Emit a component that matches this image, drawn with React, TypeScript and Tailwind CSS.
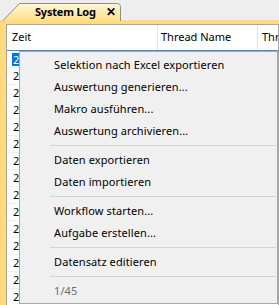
const rows = Array.from({ length: 15 }, () => "2");

type MenuEntry = { label: string; disabled?: boolean } | "sep";

const menu: MenuEntry[] = [
  { label: "Selektion nach Excel exportieren" },
  { label: "Auswertung generieren..." },
  { label: "Makro ausführen..." },
  { label: "Auswertung archivieren..." },
  "sep",
  { label: "Daten exportieren" },
  { label: "Daten importieren" },
  "sep",
  { label: "Workflow starten..." },
  { label: "Aufgabe erstellen..." },
  "sep",
  { label: "Datensatz editieren" },
  "sep",
  { label: "1/45", disabled: true },
];

function Tab() {
  return (
    <div className="relative ml-[2px] mt-[3px] h-[17px] w-[120px] flex items-center">
      <svg className="absolute inset-0" width="120" height="18" viewBox="0 0 120 18">
        <defs>
          <linearGradient id="tabfill" x1="0" y1="0" x2="0" y2="1">
            <stop offset="0" stopColor="#fff7d9" />
            <stop offset="1" stopColor="#ffdf86" />
          </linearGradient>
        </defs>
        <path d="M0.5 18 L17.5 0.5 H115.5 Q118.5 0.5 118.5 3.5 V18" fill="url(#tabfill)" stroke="#8e8e8e" strokeWidth="1" />
      </svg>
      <span className="relative ml-[33px] font-bold text-[11px] tracking-[-0.2px] text-black leading-none">System Log</span>
      <span className="relative ml-[10px] text-[12px] font-bold text-black leading-none">✕</span>
    </div>
  );
}

export default function App() {
  return (
    <div className="relative w-[279px] h-[305px] overflow-hidden bg-[#eeeeee] font-['Noto_Sans',sans-serif] text-[11px] text-black">
      <div className="h-[20px] flex items-start">
        <Tab />
      </div>
      <div className="h-[285px] bg-[#ffda7f] pl-[6px] pt-[4px]">
        <div className="h-full bg-white border-l border-t border-r border-[#a5a5a5] overflow-hidden">
          <div className="h-[26px] flex border-b border-[#3f8fdc]">
            <div className="w-[151px] shrink-0 border-r border-[#e5e5e5] pl-[5px] flex items-center">Zeit</div>
            <div className="w-[100px] shrink-0 border-r border-[#e5e5e5] pl-[3px] flex items-center">Thread Name</div>
            <div className="pl-[4px] flex items-center whitespace-nowrap">Thread ID</div>
          </div>
          {rows.map((r, i) => (
            <div key={i} className="h-[17px] flex items-center border-b border-[#f0f0f0]">
              <span
                className={
                  i === 0
                    ? "ml-[5px] pl-px pr-[2px] bg-[#0078d7] text-white leading-[13px]"
                    : "ml-[6px]"
                }
              >
                {r}
              </span>
            </div>
          ))}
        </div>
      </div>

      <div className="absolute left-[19px] top-[51px] w-[259px] bg-[#f0f0f0] border border-[#a8a8a8] pt-[2px] pb-px">
        {menu.map((m, i) =>
          m === "sep" ? (
            <div key={i} className="h-[7px] flex items-center pl-[30px] pr-px">
              <div className="h-px w-full bg-[#d4d4d4]" />
            </div>
          ) : (
            <div
              key={i}
              className={`h-[22px] flex items-center pl-[34px] tracking-[0.1px] ${m.disabled ? "text-[#6d6d6d]" : "text-black"}`}
            >
              {m.label}
            </div>
          )
        )}
      </div>
    </div>
  );
}
